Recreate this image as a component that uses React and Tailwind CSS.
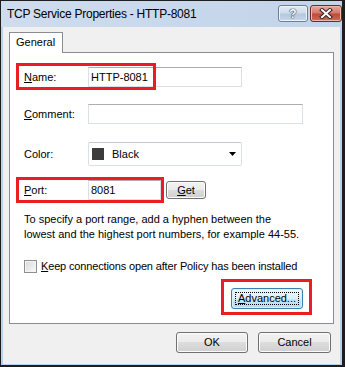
import React from "react";

const btn =
  "flex items-center justify-center border border-[#707070] rounded-[3px] bg-[linear-gradient(#f2f2f2_0%,#ebebeb_50%,#dddddd_50%,#cfcfcf_100%)] shadow-[inset_0_0_0_1px_#fcfcfc] text-[11px] text-black";

function Label({ children }) {
  return <div className="w-[64px] shrink-0 text-[11px] leading-[13px] text-black">{children}</div>;
}

const input =
  "h-[20px] bg-white border border-[#dbdfe6] border-t-[#abadb3] flex items-center pl-[2px] text-[11px] text-black";

export default function App() {
  return (
    <div className="relative w-[346px] h-[367px] bg-white font-['Liberation_Sans',Arial,sans-serif]">
      <div className="w-[345px] h-[367px] flex flex-col border-l border-t border-r-[3px] border-b-[2px] border-[#1e1e1e] bg-[#b9d1ec]">
        {/* Title bar */}
        <div className="h-[26px] shrink-0 flex items-start bg-[linear-gradient(90deg,#cfdcee,#c2d4ea)]">
          <div className="flex-1 pl-[6px] pt-[6px] text-[12px] leading-[14px] tracking-[-0.25px] text-black">
            TCP Service Properties - HTTP-8081
          </div>
          <div className="flex gap-[2px] pt-[4px] pr-0">
            <div className="w-[30px] h-[17px] rounded-[3px] border border-[#6d7e95] bg-[linear-gradient(#e3ebf5_0%,#cfdcec_45%,#b4c8e0_55%,#c6d7ec_100%)] shadow-[inset_0_0_0_1px_#eef3fa] flex items-center justify-center">
              <span className="text-[12px] font-bold leading-none text-white [text-shadow:0_0_1px_#2c3848,0_0_1px_#2c3848,0_0_1px_#2c3848]">?</span>
            </div>
            <div className="w-[32px] h-[17px] rounded-[3px] border border-[#6b2a26] bg-[linear-gradient(#e9a99c_0%,#d47a6b_45%,#c04a3c_55%,#cf6a55_100%)] shadow-[inset_0_0_0_1px_#f0b9ad] flex items-center justify-center">
              <svg width="14" height="11" viewBox="0 0 14 11">
                <path d="M3 2 L11 9 M11 2 L3 9" stroke="#3a2020" strokeWidth="4" strokeLinecap="square" />
                <path d="M3 2 L11 9 M11 2 L3 9" stroke="#ffffff" strokeWidth="2" strokeLinecap="square" />
              </svg>
            </div>
          </div>
        </div>

        {/* Client */}
        <div className="mx-[2px] h-[337px] shrink-0 bg-[#f0f0f0] flex flex-col px-[6px] pt-[5px]">
          {/* Tab */}
          <div className="relative z-10 w-[54px] h-[21px] border border-b-0 border-[#898c95] bg-white pl-[6px] pt-[3px] text-[11px] leading-[13px] text-black">
            General
          </div>
          {/* Panel */}
          <div className="-mt-[1px] h-[272px] border border-[#898c95] bg-white flex flex-col pl-[14px] pr-[30px]">
            <div className="mt-[14px] flex items-center">
              <Label>
                <span className="underline">N</span>ame:
              </Label>
              <div className={`${input} w-[154px]`}>HTTP-8081</div>
            </div>
            <div className="mt-[17px] flex items-center">
              <Label>
                <span className="underline">C</span>omment:
              </Label>
              <div className={`${input} w-[216px]`}></div>
            </div>
            <div className="mt-[18px] flex items-center">
              <Label>Color:</Label>
              <div className="w-[154px] h-[24px] bg-white border border-[#dbdfe6] border-t-[#c5c9cf] rounded-[2px] flex items-center pl-[3px] pr-[5px]">
                <div className="w-[12px] h-[12px] bg-[#3c3c3c]" />
                <div className="ml-[8px] flex-1 text-[11px] text-black">Black</div>
                <svg width="7" height="4" viewBox="0 0 7 4">
                  <path d="M0 0 H7 L3.5 4 Z" fill="#000" />
                </svg>
              </div>
            </div>
            <div className="mt-[14px] flex items-center">
              <Label>
                <span className="underline">P</span>ort:
              </Label>
              <div className={`${input} w-[73px]`}>8081</div>
              <div className={`${btn} ml-[5px] w-[40px] h-[18px]`}>
                <span className="underline">G</span>et
              </div>
            </div>
            <p className="mt-[12px] text-[11px] leading-[15px] text-black">
              To specify a port range, add a hyphen between the
              <br />
              lowest and the highest port numbers, for example 44-55.
            </p>
            <div className="mt-[18px] flex items-center">
              <div className="w-[13px] h-[13px] border border-[#8e8f8f] bg-[linear-gradient(135deg,#d8d8d8,#fbfbfb)] shadow-[inset_0_0_0_1px_#f4f4f4]" />
              <div className="ml-[4px] text-[11px] leading-[13px] tracking-[-0.15px] text-black">
                <span className="underline">K</span>eep connections open after Policy has been installed
              </div>
            </div>
            <div className="mt-[15px] flex justify-end">
              <div className="relative w-[72px] h-[21px] rounded-[3px] border border-[#3c7fb1] bg-[linear-gradient(#eef8fe_0%,#ddf1fc_50%,#c6e8fb_50%,#b2dcf3_100%)] shadow-[inset_0_0_0_1px_#d9f0fc] flex items-center justify-center text-[11px] text-black">
                <div className="absolute inset-[3px] border border-dotted border-black" />
                <span>
                  <span className="underline">A</span>dvanced...
                </span>
              </div>
            </div>
          </div>
          {/* Dialog buttons */}
          <div className="mt-[8px] flex justify-end gap-[10px] pr-[3px]">
            <div className={`${btn} w-[72px] h-[21px]`}>OK</div>
            <div className={`${btn} w-[73px] h-[21px]`}>Cancel</div>
          </div>
        </div>
      </div>

      {/* Red highlight annotations */}
      <div className="absolute left-[16px] top-[63px] w-[140px] h-[27px] border-[3px] border-[#ea1c24]" />
      <div className="absolute left-[16px] top-[177px] w-[148px] h-[26px] border-[3px] border-[#ea1c24]" />
      <div className="absolute left-[221px] top-[279px] w-[91px] h-[36px] border-[3px] border-[#ea1c24]" />
    </div>
  );
}
